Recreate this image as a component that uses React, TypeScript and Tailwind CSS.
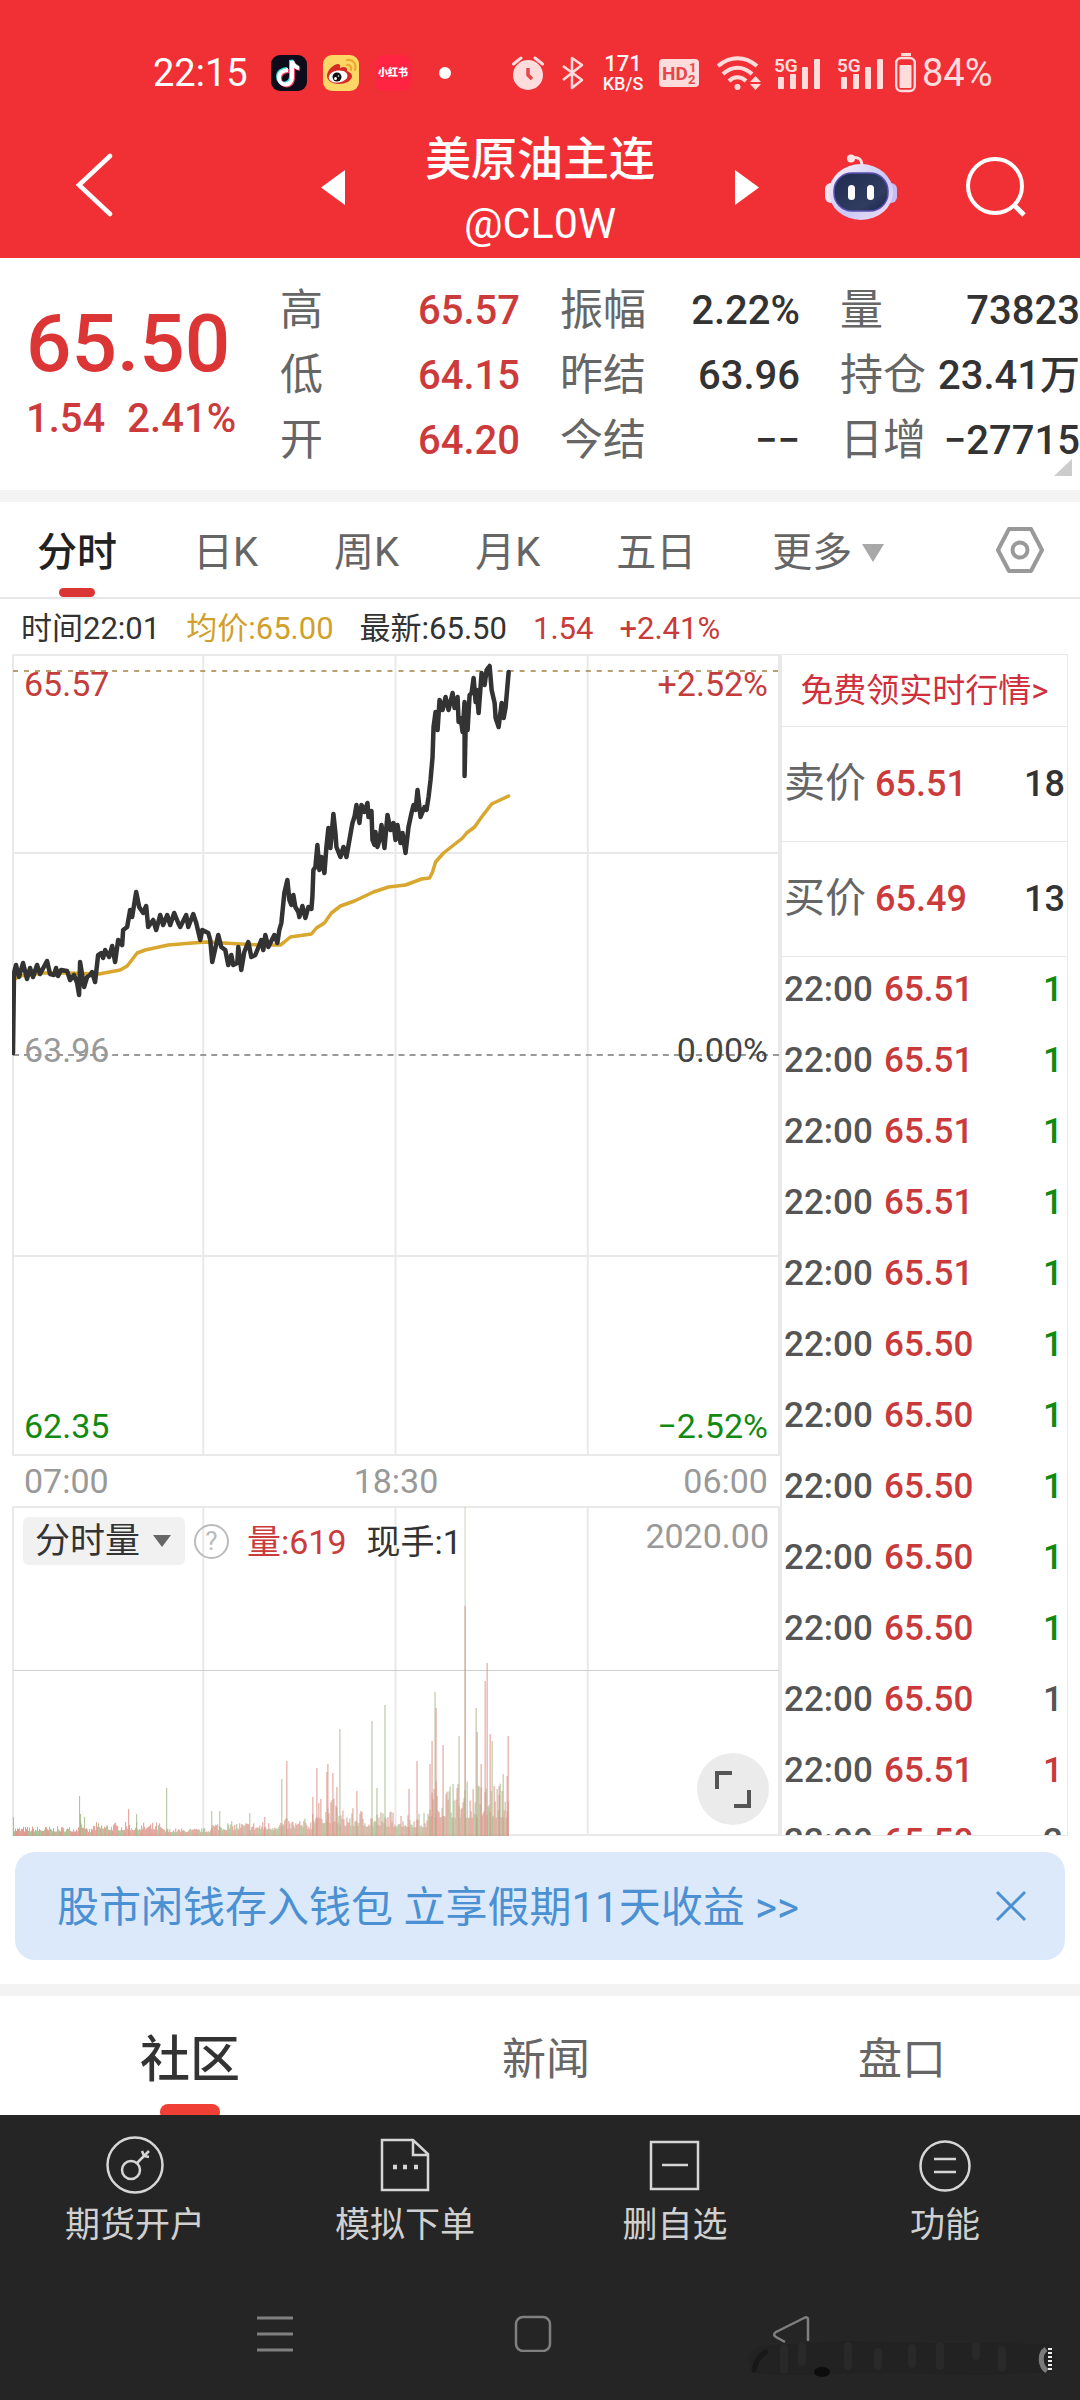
import React, { useState } from 'react';

type Point = [number, number];
type VolumeBar = { x: number; h: number; up: boolean };

// Price line of the session, in chart units (x: time, y: down from the top edge).
const PRICE: Point[] = [
    [1, 399], [2, 319], [4, 311], [7, 323], [11, 309], [15, 325], [18, 314], [21, 323], [25, 311], [28, 320],
    [35, 307], [38, 320], [42, 321], [44, 314], [46, 322], [49, 316], [55, 317], [58, 326], [62, 321], [65, 329],
    [67, 341], [68, 308], [72, 333], [75, 323], [78, 321], [80, 318], [83, 328], [86, 301], [89, 299], [91, 304],
    [93, 296], [97, 303], [100, 292], [103, 308], [106, 286], [110, 291], [111, 276], [115, 273], [118, 256], [120, 263],
    [124, 238], [127, 253], [131, 259], [134, 252], [136, 273], [141, 266], [144, 276], [148, 261], [151, 271], [155, 261],
    [158, 271], [162, 259], [166, 269], [168, 273], [174, 261], [176, 273], [181, 260], [184, 269], [188, 286], [190, 276],
    [196, 279], [198, 286], [200, 308], [206, 281], [209, 293], [213, 296], [216, 311], [219, 301], [221, 311], [225, 309],
    [226, 293], [229, 316], [232, 298], [236, 288], [239, 303], [243, 301], [249, 286], [251, 296], [253, 281], [256, 293],
    [262, 281], [265, 289], [267, 276], [269, 269], [272, 239], [275, 226], [277, 246], [279, 251], [281, 241], [283, 253],
    [286, 258], [287, 263], [290, 252], [293, 264], [296, 253], [299, 255], [300, 243], [301, 216], [303, 213], [305, 191],
    [307, 216], [309, 203], [312, 219], [314, 193], [316, 174], [318, 194], [321, 160], [323, 179], [324, 193], [328, 203],
    [331, 193], [334, 203], [337, 186], [340, 169], [342, 163], [344, 151], [347, 169], [349, 151], [352, 158], [355, 149],
    [356, 163], [359, 157], [360, 186], [362, 191], [363, 178], [365, 193], [367, 186], [369, 171], [372, 194], [375, 161],
    [378, 176], [381, 169], [383, 186], [385, 171], [388, 189], [390, 179], [393, 199], [396, 173], [399, 159], [401, 151],
    [403, 156], [405, 136], [408, 163], [412, 153], [414, 156], [416, 143], [418, 126], [420, 103], [421, 73], [423, 58],
    [425, 76], [427, 46], [430, 56], [433, 43], [436, 56], [440, 39], [442, 54], [445, 43], [446, 68], [448, 64],
    [450, 78], [452, 48], [452, 122], [453, 76], [455, 76], [457, 41], [459, 39], [461, 24], [463, 48], [464, 36],
    [466, 59], [469, 19], [472, 31], [474, 16], [477, 12], [479, 36], [482, 49], [483, 64], [486, 73], [489, 49],
    [491, 64], [493, 53], [496, 18],
];

const AVERAGE: Point[] = [
    [3, 325], [8, 322], [32, 319], [56, 319], [87, 320], [108, 316], [115, 312], [125, 299], [133, 296], [156, 291],
    [180, 289], [194, 288], [228, 290], [249, 291], [268, 291], [272, 288], [278, 283], [299, 280], [304, 274], [312, 269],
    [319, 259], [328, 252], [342, 247], [361, 238], [376, 233], [393, 231], [409, 225], [417, 224], [420, 218], [423, 208],
    [431, 199], [450, 184], [454, 179], [462, 173], [469, 163], [479, 150], [496, 142],
];

// Minutes with unusually high volume: x, height, 1 = up / 0 = down.
const SPIKES: [number, number, number][] = [
    [1, 19, 0], [67, 40, 0], [68, 22, 0], [116, 27, 1], [124, 22, 0], [154, 48, 0], [199, 25, 0], [207, 25, 0], [237, 23, 0], [252, 19, 1],
    [269, 57, 0], [274, 75, 1], [300, 39, 1], [304, 68, 1], [314, 64, 1], [315, 72, 1], [320, 63, 1], [324, 49, 1],
    [327, 107, 0], [344, 45, 1], [359, 115, 0], [364, 48, 0], [372, 131, 0], [396, 47, 1], [404, 75, 1], [417, 72, 1],
    [419, 95, 1], [422, 144, 0], [423, 128, 1], [430, 91, 1], [440, 52, 0], [446, 100, 0], [452, 329, 0], [452, 230, 1],
    [463, 128, 0], [464, 104, 1], [468, 72, 1], [472, 155, 1], [474, 173, 1], [477, 102, 1], [479, 95, 0], [486, 50, 1],
    [490, 62, 0], [494, 60, 1], [495, 100, 1],
];

// [until x, tallest ordinary bar]
const LEVELS: [number, number][] = [
    [66, 8], [73, 20], [80, 6], [150, 12], [198, 6], [262, 13], [300, 16], [326, 36], [350, 26], [392, 24], [416, 22], [436, 56], [497, 54],
];

const buildVolume = (): VolumeBar[] => {
    const bars: VolumeBar[] = [];
    let seed = 7;
    const next = () => {
        seed = (seed * 16807) % 2147483647;
        return seed / 2147483647;
    };
    for (let x = 1; x <= 495; x++) {
        const level = LEVELS.find(([until]) => x < until)?.[1] ?? 10;
        const r = next();
        bars.push({ x, h: 2 + level * (0.3 + 0.7 * r * r), up: next() > 0.42 });
    }
    SPIKES.forEach(([x, h, up]) => bars.push({ x, h, up: up === 1 }));
    return bars;
};

const VOLUME = buildVolume();

const STATS = [
    { label: '高', value: '65.57', red: true },
    { label: '振幅', value: '2.22%', red: false },
    { label: '量', value: '73823', red: false },
    { label: '低', value: '64.15', red: true },
    { label: '昨结', value: '63.96', red: false },
    { label: '持仓', value: '23.41万', red: false },
    { label: '开', value: '64.20', red: true },
    { label: '今结', value: '−−', red: false },
    { label: '日增', value: '−27715', red: false },
];

const PERIODS = ['分时', '日K', '周K', '月K', '五日', '更多'];

const TICKS = [
    { price: '65.51', volume: '1', color: 'text-[#128a12]' },
    { price: '65.51', volume: '1', color: 'text-[#128a12]' },
    { price: '65.51', volume: '1', color: 'text-[#128a12]' },
    { price: '65.51', volume: '1', color: 'text-[#128a12]' },
    { price: '65.51', volume: '1', color: 'text-[#128a12]' },
    { price: '65.50', volume: '1', color: 'text-[#128a12]' },
    { price: '65.50', volume: '1', color: 'text-[#128a12]' },
    { price: '65.50', volume: '1', color: 'text-[#128a12]' },
    { price: '65.50', volume: '1', color: 'text-[#128a12]' },
    { price: '65.50', volume: '1', color: 'text-[#128a12]' },
    { price: '65.50', volume: '1', color: 'text-[#555555]' },
    { price: '65.51', volume: '1', color: 'text-[#c93a3a]' },
    { price: '65.50', volume: '2', color: 'text-[#555555]' },
];

const toPoints = (points: Point[]) => points.map(p => p.join(',')).join(' ');

const SignalIcon: React.FC = () => (
    <svg className="w-[47px] h-9" viewBox="0 0 47 36" fill="#ffdcdc" aria-hidden="true">
        <text x="0" y="17" fontFamily="Roboto, sans-serif" fontSize="19" fontWeight="600">5G</text>
        <rect x="4" y="22" width="6" height="12" rx="1" />
        <rect x="16" y="19" width="6" height="15" rx="1" />
        <rect x="28" y="12" width="6" height="22" rx="1" />
        <rect x="40" y="4" width="6" height="30" rx="1" />
    </svg>
);

const StatusBar: React.FC = () => (
    <div className="flex items-center h-[127px] pl-[153px] pt-[18px] text-white">
        <span className="text-[38px] leading-none w-[118px]">22:15</span>
        <div className="flex items-center gap-4">
            <svg className="size-9" viewBox="0 0 36 36" aria-label="抖音">
                <rect width="36" height="36" rx="9" fill="#0e0c1a" />
                <g fill="none" strokeWidth="4">
                    <path d="M17 15c-5 0-9 3-9 7.500s3 7 6.500 7 6.500-3 6.500-7V6c1 4 3.500 6.500 7 7" stroke="#35d9dd" transform="translate(-1 -1)" />
                    <path d="M17 15c-5 0-9 3-9 7.500s3 7 6.500 7 6.500-3 6.500-7V6c1 4 3.500 6.500 7 7" stroke="#f0436a" transform="translate(1 1)" />
                    <path d="M17 15c-5 0-9 3-9 7.500s3 7 6.500 7 6.500-3 6.500-7V6c1 4 3.500 6.500 7 7" stroke="#fff" />
                </g>
            </svg>
            <svg className="size-9" viewBox="0 0 36 36" aria-label="微博">
                <rect width="36" height="36" rx="9" fill="#fcd765" />
                <path d="M4 21c0-6 7-12 11-12 3 0 2 3 2 4 4-2 8-1 7 3 3 1 5 3 5 5 0 5-7 8-13 8S4 26 4 21z" fill="#d62a24" />
                <ellipse cx="15" cy="21.500" rx="9.500" ry="6" fill="#fff" transform="rotate(-8 15 21)" />
                <circle cx="14" cy="22" r="4.500" fill="#111" />
                <circle cx="12.500" cy="23.500" r="1.500" fill="#fff" />
                <circle cx="15.500" cy="21" r=".8" fill="#fff" />
                <path d="M24 10c3-.5 5 2 4 5M24 5c6-1 10 4 8 10" fill="none" stroke="#eda62e" strokeWidth="2.200" strokeLinecap="round" />
            </svg>
            <span className="flex size-9 items-center justify-center rounded-[9px] bg-[#ff2442] text-[10px] font-black leading-none whitespace-nowrap">小红书</span>
        </div>
        <span className="ml-7 size-3 rounded-full bg-white" />
        <div className="flex items-center ml-[61px] text-[#ffdcdc]">
            <svg className="w-8 h-9" viewBox="0 0 32 36" aria-label="闹钟">
                <circle cx="16" cy="20" r="15" fill="#ffdcdc" />
                <path d="M1.500 9 9 3M30.500 9 23 3" stroke="#ffdcdc" strokeWidth="3" strokeLinecap="round" />
                <path d="M16 13v7l4 4" fill="none" stroke="#e8454a" strokeWidth="3.500" />
            </svg>
            <svg className="w-[22px] h-9 ml-[18px]" viewBox="0 0 22 36" fill="none" stroke="#ffdcdc" strokeWidth="2.500" aria-label="蓝牙">
                <path d="M1 11l19 14-10 8V3l10 7L1 25" strokeLinejoin="round" />
            </svg>
            <span className="flex flex-col items-center w-[46px] ml-4 text-[#fff3f3] font-medium">
                <span className="text-[22px] leading-[22px]">171</span>
                <span className="text-[18px] leading-[18px]">KB/S</span>
            </span>
            <svg className="w-10 h-7 ml-[13px]" viewBox="0 0 40 28" aria-label="HD">
                <rect width="40" height="28" rx="4" fill="#ffdcdc" />
                <g fill="#e8454a" fontFamily="Roboto, sans-serif" fontWeight="700">
                    <text x="3" y="21" fontSize="19">HD</text>
                    <text x="30" y="13" fontSize="13">1</text>
                    <text x="29" y="25" fontSize="13">2</text>
                </g>
            </svg>
            <svg className="w-11 h-9 ml-[18px]" viewBox="0 0 44 36" fill="none" stroke="#ffdcdc" strokeWidth="4" aria-label="Wi-Fi">
                <path d="M1 11C13 .5 28 .5 40 11M6 19c9-8.500 20-8.500 29 0M12 26c5-5 12-5 17 0" />
                <circle cx="20.500" cy="32" r="3" fill="#ffdcdc" stroke="none" />
                <path d="M33 27l5.500-6 5.500 6zM33 29h11l-5.500 6z" fill="#ffdcdc" stroke="none" />
            </svg>
            <span className="flex gap-4 ml-[13px]">
                <SignalIcon />
                <SignalIcon />
            </span>
            <svg className="w-[21px] h-10 ml-[11px]" viewBox="0 0 21 40" fill="none" aria-label="电池">
                <rect x="6" y="0" width="10" height="3" fill="#ffdcdc" />
                <rect x="1.200" y="5" width="18.600" height="33" rx="5" stroke="#ffdcdc" strokeWidth="2.400" />
                <rect x="4.500" y="12" width="12" height="23" rx="1" fill="#ffdcdc" />
            </svg>
            <span className="ml-[6px] text-[38px] leading-none">84%</span>
        </div>
    </div>
);

const TitleBar: React.FC = () => (
    <div className="grid grid-cols-[1fr_auto_1fr] items-center h-[131px] text-white">
        <div className="pb-4">
            <button className="block ml-[74px] w-10 h-16" aria-label="返回">
                <svg className="size-full" viewBox="0 0 40 64" fill="none" stroke="#fff" strokeWidth="4.500" strokeLinecap="round">
                    <path d="M36 3 5 32l31 29" />
                </svg>
            </button>
        </div>
        <div className="flex items-center justify-between w-[438px]">
            <button className="pb-3" aria-label="上一个">
                <svg className="w-6 h-[35px]" viewBox="0 0 24 35" fill="#fff"><path d="M24 0v35L0 17.500z" /></svg>
            </button>
            <h1 className="flex flex-col items-center pb-1 text-center">
                <span className="text-[46px] leading-[64px] font-medium">美原油主连</span>
                <span className="text-[43px] leading-[64px]">@CL0W</span>
            </h1>
            <button className="pb-3" aria-label="下一个">
                <svg className="w-6 h-[35px]" viewBox="0 0 24 35" fill="#fff"><path d="M0 0v35l24-17.500z" /></svg>
            </button>
        </div>
        <div className="flex items-center justify-end gap-[69px] pr-[54px] pb-3">
            <button aria-label="智能助手">
                <svg className="w-[72px] h-[66px]" viewBox="0 0 72 66">
                    <defs>
                        <linearGradient id="shell" x1="0" y1="0" x2="1" y2="1">
                            <stop offset="0" stopColor="#fff4f6" />
                            <stop offset=".55" stopColor="#c9c8f8" />
                            <stop offset="1" stopColor="#f2dff5" />
                        </linearGradient>
                        <linearGradient id="visor" x1="0" y1="0" x2="1" y2="1">
                            <stop offset="0" stopColor="#1f2c50" />
                            <stop offset=".7" stopColor="#303c60" />
                            <stop offset="1" stopColor="#1d2450" />
                        </linearGradient>
                    </defs>
                    <path d="M26 4c7-2 11 1 11 8" fill="none" stroke="#ffdfe2" strokeWidth="3" />
                    <circle cx="26" cy="4.500" r="4" fill="#ffe3e5" />
                    <rect x="0" y="29" width="12" height="20" rx="6" fill="#f7e4ee" />
                    <rect x="60" y="29" width="12" height="20" rx="6" fill="#c6bdf5" />
                    <ellipse cx="36" cy="38" rx="32" ry="28" fill="url(#shell)" />
                    <rect x="9" y="19" width="54" height="38" rx="18" fill="url(#visor)" stroke="#5a4fae" strokeWidth="1.500" />
                    <rect x="23" y="31" width="7" height="15" rx="3.500" fill="#fff" />
                    <rect x="42" y="31" width="7" height="15" rx="3.500" fill="#fff" />
                </svg>
            </button>
            <button aria-label="搜索">
                <svg className="size-[60px]" viewBox="0 0 60 60" fill="none" stroke="#fff" strokeWidth="4">
                    <circle cx="29" cy="29" r="27" />
                    <path d="M48 48l10 10" strokeWidth="5" />
                </svg>
            </button>
        </div>
    </div>
);

const QuoteSummary: React.FC = () => (
    <section className="relative flex h-[232px] bg-white">
        <div className="w-[280px] pl-[26px] pt-[36px] text-[#dc3535] font-medium">
            <p className="text-[80px] leading-[100px]">65.50</p>
            <p className="flex gap-[22px] text-[40px] leading-[50px] text-[#cc3b3b]">
                <span>1.54</span>
                <span>2.41%</span>
            </p>
        </div>
        <dl className="grid flex-1 grid-cols-3 content-start gap-x-10 pt-5 leading-[65px]">
            {STATS.map(item => (
                <div key={item.label} className="flex justify-between whitespace-nowrap">
                    <dt className="text-[43px] text-[#666666]">{item.label}</dt>
                    <dd className={item.red ? 'text-[40px] font-medium text-[#cc3b3b]' : 'text-[40px] font-medium text-[#333333]'}>
                        {item.value}
                    </dd>
                </div>
            ))}
        </dl>
        <svg className="absolute right-2 bottom-[14px] w-[18px] h-[17px]" viewBox="0 0 18 17" fill="#cccccc"><path d="M18 0v17H0z" /></svg>
    </section>
);

const PeriodTabs: React.FC = () => {
    const [active, setActive] = useState('分时');

    return (
        <nav className="flex items-start justify-between h-[97px] pl-[37px] pr-9 border-b-2 border-[#e6e6e6]">
            <div className="flex gap-[76px] text-[40px] leading-[50px] pt-[26px]">
                {PERIODS.map(name => (
                    <button key={name} onClick={() => setActive(name)} className="flex flex-col items-center">
                        <span className={name === active ? 'font-medium text-[#222222]' : 'flex items-center gap-[10px] text-[#666666]'}>
                            {name}
                            {name === '更多' && (
                                <svg className="w-[22px] h-[18px]" viewBox="0 0 22 18" fill="#a8a8a8"><path d="M0 0h22L11 18z" /></svg>
                            )}
                        </span>
                        {name === active && <span className="mt-[10px] h-[9px] w-9 rounded-full bg-[#dc3535]" />}
                    </button>
                ))}
            </div>
            <button className="mt-[25px]" aria-label="设置">
                <svg className="w-12 h-[46px]" viewBox="0 0 48 46" fill="none" stroke="#999999" strokeWidth="4" strokeLinejoin="round">
                    <path d="M13 2h22l11 21-11 21H13L2 23z" />
                    <circle cx="24" cy="23" r="7.500" />
                </svg>
            </button>
        </nav>
    );
};

const PriceChart: React.FC = () => (
    <div className="relative h-[802px] text-[34px] leading-10">
        <svg className="block size-full" viewBox="0 0 767 802" preserveAspectRatio="none" fill="none">
            <path d="M1 1H766V801H1zM191 1V801M383 1V801M575 1V801M1 199H766M1 602H766" stroke="#e9e9e9" strokeWidth="2" />
            <path d="M1 17H766" stroke="#b8a070" strokeWidth="2" strokeDasharray="5 6" />
            <path d="M1 401H766" stroke="#999999" strokeWidth="2" strokeDasharray="6 5" />
            <polyline points={toPoints(AVERAGE)} stroke="#d9a62e" strokeWidth="3.500" strokeLinejoin="round" strokeLinecap="round" />
            <polyline points={toPoints(PRICE)} stroke="#333333" strokeWidth="4.500" strokeLinejoin="round" strokeLinecap="round" />
        </svg>
        <div className="absolute inset-x-3 top-[10px] flex justify-between text-[#c43c3c]">
            <span>65.57</span>
            <span>+2.52%</span>
        </div>
        <div className="absolute inset-x-3 top-[376px] flex justify-between text-[#444444]">
            <span className="text-[#999999]">63.96</span>
            <span>0.00%</span>
        </div>
        <div className="absolute inset-x-3 bottom-[10px] flex justify-between text-[#128a12]">
            <span>62.35</span>
            <span>−2.52%</span>
        </div>
    </div>
);

const VolumeChart: React.FC = () => (
    <div className="relative h-[330px] text-[34px]">
        <svg className="block size-full" viewBox="0 0 767 330" preserveAspectRatio="none" fill="none">
            <path d="M1 1H766V329H1zM191 1V329M383 1V329M575 1V329" stroke="#e9e9e9" strokeWidth="2" />
            <path d="M1 164.500H766" stroke="#cfcfcf" strokeWidth="1" />
            {VOLUME.map((bar, index) => (
                <rect key={index} x={bar.x} y={330 - bar.h} width="1" height={bar.h} fill={bar.up ? '#dc8f84' : '#a3b988'} opacity={bar.h > 250 ? 0.6 : 0.9} />
            ))}
        </svg>
        <div className="absolute inset-x-[11px] top-[11px] flex h-12 items-center text-[#333333]">
            <label className="relative flex h-12 w-[162px] items-center rounded-md bg-[#f1f1f1]">
                <select aria-label="副图指标" className="h-12 w-full appearance-none bg-transparent pl-3 pt-[2px] text-[35px] leading-[46px] outline-none">
                    <option>分时量</option>
                </select>
                <svg className="absolute right-[14px] w-[18px] h-3" viewBox="0 0 18 12" fill="#666666"><path d="M0 0h18l-9 12z" /></svg>
            </label>
            <button aria-label="说明" className="ml-[9px] flex size-[35px] items-center justify-center rounded-full border-2 border-[#bbbbbb] text-[26px] leading-none text-[#bbbbbb]">?</button>
            <span className="ml-[18px] pt-[2px] leading-[46px] text-[#cc3b3b]">量:619</span>
            <span className="ml-[20px] pt-[2px] leading-[46px]">现手:1</span>
            <span className="ml-auto self-start leading-[38px] text-[#999999]">2020.00</span>
        </div>
        <button aria-label="全屏" className="absolute right-[11px] bottom-[11px] flex size-[72px] items-center justify-center rounded-full bg-[#ebebeb]">
            <svg className="w-9 h-[37px]" viewBox="0 0 36 37" fill="none" stroke="#555555" strokeWidth="4">
                <path d="M2 18V2h15M34 19v16H19" />
            </svg>
        </button>
    </div>
);

const QuoteRow: React.FC<{ label: string; price: string; volume: string }> = ({ label, price, volume }) => (
    <div className="flex h-[115px] items-center border-b border-[#e9e9e9] pl-[2px] pr-[2px] text-[36px]">
        <span className="w-[91px] text-[41px] text-[#666666]">{label}</span>
        <span className="font-medium text-[#cc3b3b]">{price}</span>
        <span className="ml-auto font-medium text-[#333333]">{volume}</span>
    </div>
);

const OrderPanel: React.FC = () => (
    <aside className="h-[1182px] w-[288px] shrink-0 overflow-hidden border border-l-2 border-[#e9e9e9]">
        <a href="#level2" className="flex h-[72px] items-center justify-center border-b border-[#e9e9e9] text-[33px] text-[#d0303c]">免费领实时行情&gt;</a>
        <QuoteRow label="卖价" price="65.51" volume="18" />
        <QuoteRow label="买价" price="65.49" volume="13" />
        <table className="w-full text-left text-[35px] font-medium leading-[66px]">
            <tbody>
                {TICKS.map((tick, index) => (
                    <tr key={index} className="h-[71px] align-top">
                        <td className="w-[102px] pl-[2px] text-[#555555]">22:00</td>
                        <td className="text-[#c93a3a]">{tick.price}</td>
                        <td className={`pr-1 text-right ${tick.color}`}>{tick.volume}</td>
                    </tr>
                ))}
            </tbody>
        </table>
    </aside>
);

const ContentTabs: React.FC = () => {
    const [active, setActive] = useState('社区');

    return (
        <nav className="grid h-[119px] grid-cols-3 overflow-hidden bg-white pl-3 pt-[28px]">
            {['社区', '新闻', '盘口'].map(name => (
                <button key={name} onClick={() => setActive(name)} className="flex flex-col items-center leading-[72px]">
                    <span className={name === active ? 'text-[50px] font-medium text-[#333333]' : 'text-[44px] text-[#666666]'}>{name}</span>
                    {name === active && <span className="mt-2 h-4 w-[60px] shrink-0 rounded-lg bg-[#f04035]" />}
                </button>
            ))}
        </nav>
    );
};

const ACTIONS = [
    {
        label: '期货开户',
        icon: (
            <>
                <circle cx="29" cy="29" r="27.500" />
                <circle cx="25" cy="34" r="9" />
                <path d="M31 27 43 15M36 15l2 5 5 1" />
            </>
        ),
    },
    {
        label: '模拟下单',
        icon: (
            <>
                <path d="M6 4h31l15 14v36H6zM37 4v15h15" />
                <path d="M17 31h4M27 31h4M38 31h4" strokeWidth="4.500" />
            </>
        ),
    },
    {
        label: '删自选',
        icon: (
            <>
                <path d="M5 6h47v47H5z" />
                <path d="M16 29h26" />
            </>
        ),
    },
    {
        label: '功能',
        icon: (
            <>
                <circle cx="29" cy="30" r="24.500" />
                <path d="M18 23h22M18 36h22" />
            </>
        ),
    },
];

const Footer: React.FC = () => (
    <footer className="flex-1 bg-[#252525] pt-[21px] pb-6 text-[#d0d0d0]">
        <div className="grid grid-cols-4">
            {ACTIONS.map(action => (
                <button key={action.label} className="flex flex-col items-center">
                    <svg className="size-[58px]" viewBox="0 0 58 58" fill="none" stroke="#d6d6d6" strokeWidth="2.500">{action.icon}</svg>
                    <span className="mt-[7px] text-[35px] leading-[50px]">{action.label}</span>
                </button>
            ))}
        </div>
        <div className="relative mt-[63px] flex justify-center gap-[220px] pr-[14px]">
            <button aria-label="最近任务">
                <svg className="size-[38px]" viewBox="0 0 38 38" stroke="#808080" strokeWidth="3"><path d="M1 4h36M1 20h36M1 36h36" /></svg>
            </button>
            <button aria-label="主屏幕">
                <svg className="size-[38px]" viewBox="0 0 38 38" fill="none" stroke="#808080" strokeWidth="2.500"><rect x="2" y="3" width="34" height="34" rx="7" /></svg>
            </button>
            <button aria-label="后退">
                <svg className="size-[38px]" viewBox="0 0 38 38" fill="none" stroke="#808080" strokeWidth="2.500">
                    <path d="M36 27V5c0-2-2-2-4-1L4 18c-3 2-2 4 0 5l9 5" strokeLinejoin="round" />
                </svg>
            </button>
            <svg className="absolute right-[22px] top-[24px] w-[314px] h-10" viewBox="0 0 314 40" aria-hidden="true">
                <path d="M6 14c8-8 22-6 40-8l60-3 80 2 118 1c8 4 8 20 2 28l-60 3-120-2-60 2-48-1c-10-2-18-12-12-22z" fill="#222222" />
                <path d="M40 10v22M58 8v16M104 8v20M134 14v14M168 10v16M196 8v20M232 8v10M258 12v18" stroke="#292929" strokeWidth="8" strokeLinecap="round" fill="none" />
                <path d="M10 32c2-8 4-14 12-18" stroke="#181818" strokeWidth="5" strokeLinecap="round" fill="none" />
                <ellipse cx="78" cy="34" rx="8" ry="5" fill="#0d0d0d" />
                <path d="M302 11c-7 5-6 17 1 22" stroke="#7a7a7a" strokeWidth="5" fill="none" />
                <path d="M306 10v24" stroke="#eeeeee" strokeWidth="4" strokeDasharray="2 2" />
            </svg>
        </div>
    </footer>
);

export default function App() {
    return (
        <div className="flex min-h-screen flex-col bg-white font-[Roboto,'Noto_Sans_CJK_SC',sans-serif]">
            <header className="bg-[#f13036]">
                <StatusBar />
                <TitleBar />
            </header>
            <QuoteSummary />
            <main className="border-t-[12px] border-[#f3f3f3]">
                <PeriodTabs />
                <div className="flex h-[55px] items-center gap-[26px] pl-[21px] pt-[6px] text-[31px] text-[#333333]">
                    <span>时间22:01</span>
                    <span className="text-[#d0a02a]">均价:65.00</span>
                    <span>最新:65.50</span>
                    <span className="text-[#c93a3a]">1.54</span>
                    <span className="text-[#c93a3a]">+2.41%</span>
                </div>
                <div className="flex px-3">
                    <div className="min-w-0 flex-1">
                        <PriceChart />
                        <div className="flex h-[50px] items-center justify-between px-3 text-[34px] text-[#999999]">
                            <span>07:00</span>
                            <span>18:30</span>
                            <span>06:00</span>
                        </div>
                        <VolumeChart />
                    </div>
                    <OrderPanel />
                </div>
                <div className="mx-[15px] mt-4 mb-6 flex h-[108px] items-center justify-between rounded-[20px] bg-[#dbe9fa] pl-[42px] pr-[38px] text-[#4a90d2]">
                    <a href="#wallet" className="pt-[2px] text-[42px]">股市闲钱存入钱包 立享假期11天收益 &gt;&gt;</a>
                    <button aria-label="关闭">
                        <svg className="size-8" viewBox="0 0 32 32" fill="none" stroke="#4a90d2" strokeWidth="3"><path d="M2 2l28 28M30 2 2 30" /></svg>
                    </button>
                </div>
                <div className="h-3 bg-[#f3f3f3]" />
                <ContentTabs />
            </main>
            <Footer />
        </div>
    );
}
